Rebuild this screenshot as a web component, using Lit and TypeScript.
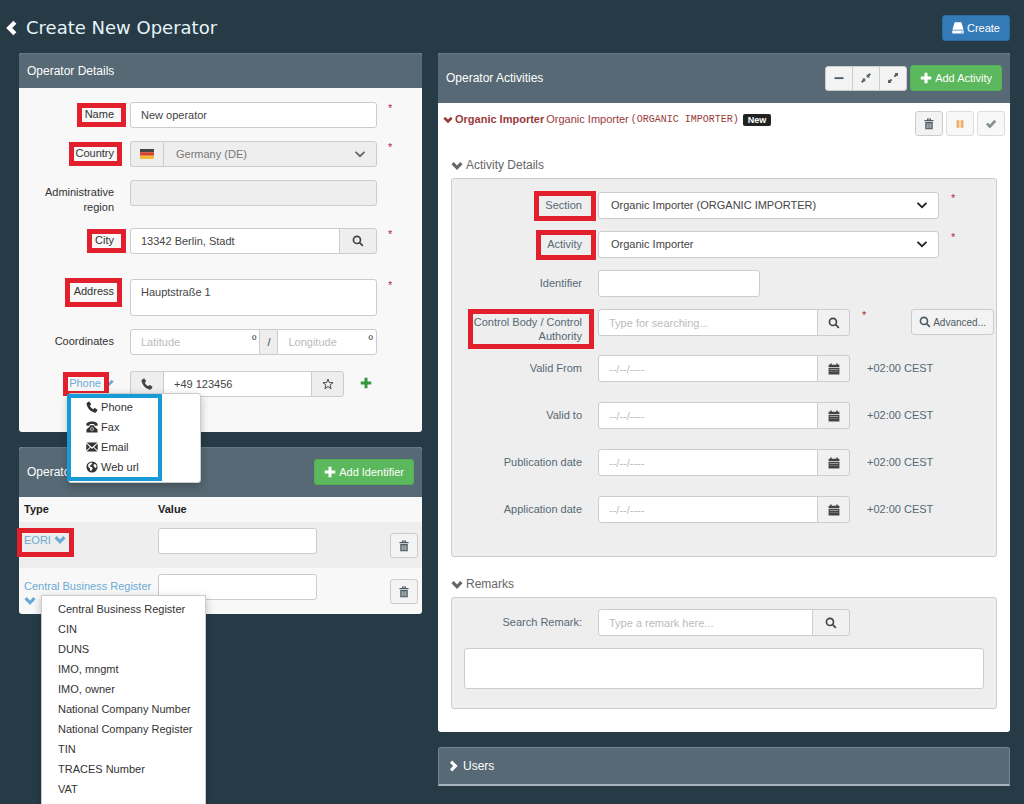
import { LitElement, html, css, svg, nothing } from "lit";
import { customElement, state } from "lit/decorators.js";

const GLYPHS = {
  left: svg`<path d="M10.4.8 13.400 3.800 9.200 8l4.200 4.200-3 3L3.200 8z"/>`,
  right: svg`<path d="M5.6.8 2.600 3.800 6.800 8l-4.200 4.200 3 3L12.800 8z"/>`,
  down: svg`<path d="M.6 5.800 3.600 2.800 8 7.200l4.400-4.400 3 3L8 13.200z"/>`,
  thin: svg`<path d="M2 5.200 8 11l6-5.800" fill="none" stroke="currentColor" stroke-width="2.4"/>`,
  plus: svg`<path d="M6 1h4v5h5v4h-5v5H6v-5H1V6h5z"/>`,
  minus: svg`<path d="M2 7h12v2.4H2z"/>`,
  search: svg`<circle cx="6.6" cy="6.6" r="4.7" fill="none" stroke="currentColor" stroke-width="2.2"/><path d="m9.4 10.9 1.5-1.5 4.4 4.2-1.7 1.7z"/>`,
  drive: svg`<path d="M3.400.4h9.200L15.400 10.400H.6zM.4 11.400h15.200V15.400H.4z"/><path d="M12 12.900h2v1h-2z" fill="#337ab7"/>`,
  shrink: svg`<path d="M9 2.600v4.600h4.400L12 5.800l2.600-2.600-1.800-1.800L10.200 4zM7 13.400V8.800H2.600L4 10.200l-2.600 2.600 1.800 1.800L5.800 12z"/>`,
  grow: svg`<path d="M10 1.400h4.600V6l-1.400-1.400-2.400 2.400L9 5.200l2.400-2.400zM6 14.600H1.400V10l1.400 1.400L5.200 9 7 10.800l-2.400 2.400z"/>`,
  trash: svg`<path d="M5.400 2.600V.8h5.200v1.800H14v1.800H2V2.600zM6.800 2v.6h2.400V2z" fill-rule="evenodd"/><path d="M3 5.400h10V15H3zM5 7v6.600h1V7zm2.500 0v6.600h1V7zM10 7v6.600h1V7z" fill-rule="evenodd"/>`,
  pause: svg`<path d="M3.400 3h3.800v10H3.400zM8.800 3h3.800v10H8.800z"/>`,
  check: svg`<path d="m1.200 8.800 2.600-2.600 2.800 2.600 5.800-6.400 2.600 2.500-8.400 9z"/>`,
  calendar: svg`<path d="M.8 2.400h2.200V.6h2v1.800h6V.6h2v1.800h2.200v3H.8z"/><path d="M.8 6.200h14.400V15.400H.8zm1.400 2.500v.6h11.600v-.6zm0 2.800v.6h11.600v-.6z" fill-rule="evenodd"/>`,
  star: svg`<path d="m8 1.400 1.700 4.700 5 .2-3.900 3.100 1.300 4.800L8 11.500l-4.100 2.700 1.300-4.800-3.900-3.100 5-.2z" fill="none" stroke="currentColor" stroke-width="1.3"/>`,
  handset: svg`<path d="M1 2.600 3.200.9c.5-.4 1-.3 1.400.2l1.900 2.700c.3.5.2 1-.2 1.400L5 6.300c.9 2 2.600 3.700 4.700 4.700l1.200-1.300c.4-.4.9-.4 1.400-.1l2.600 1.800c.5.4.6.9.2 1.400l-1.700 2.300c-.3.4-.8.5-1.300.4C6.400 14.300 1.900 9.700.7 3.900c-.1-.5 0-1 .3-1.300z"/>`,
  fax: svg`<path d="M8 .8c3.900 0 7.600 1.400 7.600 3.800 0 1.200-.4 1.700-1.300 1.700h-2c-.9 0-1.200-.6-1.200-1.400v-.6C9.200 3.800 6.800 3.800 4.900 4.300v.6c0 .8-.3 1.400-1.200 1.400h-2C.8 6.300.4 5.800.4 4.600.4 2.200 4.100.8 8 .8z"/><path d="M5.800 5.600h4.400l.8 1.800 4.400 3.800v4H.6v-4L5 7.400zM8 8.400a2.300 2.300 0 1 0 0 4.600 2.300 2.300 0 0 0 0-4.600z" fill-rule="evenodd"/><circle cx="8" cy="10.700" r="1.400"/>`,
  mail: svg`<path d="M.8 2h14.400L8 8.400zM.4 3.400 5.200 7.900.4 12.600zM15.600 3.400v9.200L10.800 7.900zM6.200 8.800 8 10.500l1.800-1.700 5.400 5.200H.8z"/>`,
  globe: svg`<circle cx="8" cy="8" r="7.400"/><path d="M3 4.400 6.400 2l2.200.6-.8 1.800-2 1-.6 2 2.400.6 1.400 1.800-1.600 2.400-.6 1.800-1.400-2.200-.4-2.600L3 8zM10.600 4l2.600.6 1 2.600-1.400 2.400-1.800-1.800-1-1.600z" fill="#fff"/>`,
};
type Glyph = keyof typeof GLYPHS;

const icon = (name: Glyph, size = "") =>
  html`<svg class="icon ${size}" viewBox="0 0 16 16" fill="currentColor" aria-hidden="true">${GLYPHS[name]}</svg>`;

const CONTACT_TYPES: [Glyph, string][] = [
  ["handset", "Phone"],
  ["fax", "Fax"],
  ["mail", "Email"],
  ["globe", "Web url"],
];

const IDENTIFIER_TYPES = [
  "Central Business Register",
  "CIN",
  "DUNS",
  "IMO, mngmt",
  "IMO, owner",
  "National Company Number",
  "National Company Register",
  "TIN",
  "TRACES Number",
  "VAT",
];

const DATES = ["Valid From", "Valid to", "Publication date", "Application date"];

@customElement("app-root")
export class AppRoot extends LitElement {
  @state() private contactMenu = true;
  @state() private identifierMenu = true;

  static styles = css`
    :host {
      display: block;
      box-sizing: border-box;
      min-height: 100vh;
      overflow: hidden;
      background: #273b47;
      color: #333;
      font: 11px/15px "Liberation Sans", Arial, sans-serif;
    }
    * { box-sizing: border-box; }
    h1, h2, h3 { margin: 0; font-weight: normal; }
    a { color: #6aaad3; text-decoration: none; }
    button, input, select, textarea { font: inherit; color: inherit; margin: 0; }
    .icon { width: 12px; height: 12px; flex: none; vertical-align: -2px; }
    .icon.large { width: 16px; height: 16px; }
    .icon.small { width: 10px; height: 10px; vertical-align: -1px; }

    .top {
      display: flex;
      align-items: center;
      justify-content: space-between;
      padding: 15px 14px 12px 3px;
    }
    .title {
      display: flex;
      align-items: center;
      gap: 7px;
      color: #e6f3f8;
      font: 18px/26px "DejaVu Sans", Verdana, sans-serif;
    }
    .title a { display: flex; color: #fff; }
    .columns {
      display: grid;
      grid-template-columns: minmax(0, 403fr) minmax(0, 572fr);
      align-items: start;
      gap: 16px;
      padding: 0 14px 16px 19px;
    }
    .stack { display: grid; gap: 15px; }

    .panel { background: #f8f8f8; border-radius: 3px; }
    .panel.white { background: #fff; }
    .head {
      display: flex;
      align-items: center;
      gap: 3px;
      min-height: 35px;
      padding: 0 8px 1px;
      background: #566974;
      border-top: 1px solid #647883;
      border-radius: 3px 3px 0 0;
      color: #fff;
    }
    .head.tall { min-height: 50px; }
    .head h2 { flex: 1; font-size: 12px; line-height: 16px; }
    .head.users { min-height: 39px; padding: 0 9px; border: 1px solid #738590; border-bottom: 2px solid #a5b4bd; }

    .btn {
      display: inline-flex;
      align-items: center;
      justify-content: center;
      gap: 3px;
      height: 26px;
      padding: 0 9px;
      border: 1px solid #ccc;
      border-radius: 3px;
      background: #f3f3f3;
      color: #4d5b64;
      white-space: nowrap;
    }
    .btn.blue { background: #337ab7; border-color: #2e6da4; color: #fff; }
    .btn.green { background: #5cb85c; border-color: #55b055; color: #fff; }
    .btn.square { width: 28px; height: 25px; padding: 0; }
    .btn.pale { border-color: #ddd; background: #f8f8f8; color: #849094; }
    .btn.pale.amber { color: #f5ac5c; }
    .btngroup { display: flex; }
    .btngroup .btn { border-radius: 0; margin-left: -1px; }
    .btngroup .btn:first-child { border-radius: 3px 0 0 3px; margin-left: 0; }
    .btngroup .btn:last-child { border-radius: 0 3px 3px 0; }

    .row { display: grid; grid-template-columns: 95px 1fr; column-gap: 16px; }
    .row > .label { text-align: right; padding-top: 5px; }
    .line { display: flex; align-items: flex-start; }
    .req { width: 34px; margin-left: 11px; color: #b3273c; line-height: 13px; }
    .details { display: grid; gap: 13px; padding: 14px 0 35px; }
    .details .line { color: #444; }
    .details .line > .group { flex: 1; }
    .spaced { margin-bottom: 12px; }
    .contact { margin-top: 3px; }

    .group { display: flex; min-width: 0; }
    .field {
      flex: 1;
      width: 100%;
      min-width: 0;
      height: 26px;
      padding: 0 10px;
      border: 1px solid #ccc;
      border-radius: 3px;
      background: #fff;
      color: #444;
      outline: none;
      appearance: none;
      resize: none;
    }
    select.field { padding: 0 12px; }
    .field::placeholder { color: #bbb; opacity: 1; }
    .field:disabled { background: #eee; color: #777; opacity: 1; }
    textarea.field { display: block; height: 37px; padding: 5px 10px; overflow: hidden; }
    .addon {
      display: flex;
      align-items: center;
      justify-content: center;
      width: 33px;
      height: 26px;
      padding: 0;
      flex: none;
      border: 1px solid #ccc;
      background: #eee;
      color: #444;
      border-radius: 0 3px 3px 0;
    }
    .addon.wide { width: 38px; }
    .addon.slim { width: 17px; border-radius: 0; border-left: 0; border-right: 0; }
    .addon:first-child { border-radius: 3px 0 0 3px; }
    .group > * + .addon:not(.slim) { margin-left: -1px; }
    .group > :not(:last-child) .field, .group > .field:not(:last-child) { border-top-right-radius: 0; border-bottom-right-radius: 0; }
    .group > :not(:first-child) .field, .group > .field:not(:first-child) { border-top-left-radius: 0; border-bottom-left-radius: 0; }
    .group > .addon:first-child { border-right: 0; }
    .pick { position: relative; display: flex; flex: 1; }
    .pick .icon { position: absolute; right: 11px; top: 7px; pointer-events: none; color: #222; }
    .pick.off .icon { color: #666; }
    .unit { position: relative; display: flex; }
    .unit.lat { flex: 131 1 0; }
    .unit.lon { flex: 100 1 0; }
    .unit span { position: absolute; right: 4px; top: 4px; font-size: 12px; }
    .flag { width: 14px; height: 10px; }
    .number { width: 214px; }
    .details .line > .number { flex: none; }
    .addline { margin: 6px 0 0 16px; padding: 0; border: 0; background: none; color: #35983a; display: flex; }

    .mark { position: relative; display: inline-block; }
    .mark::after {
      content: "";
      position: absolute;
      inset: -4px -12px -5px -8px;
      border: 5px solid #e2202d;
      pointer-events: none;
    }
    .mark.tight::after { right: -8px; left: -6px; }
    .mark.deep::after { inset: -6px -8px -8px -9px; }
    .mark.large::after { inset: -7px -14px -9px -11px; }
    .mark.block { max-width: 110px; }
    .mark.block::after { inset: -6px -12px -6px -4px; }
    .mark.type::after { inset: -5px -8px -9px -7px; }

    .menuhost { position: relative; }
    .menu {
      position: absolute;
      z-index: 2;
      margin: 0;
      padding: 3px 0 5px;
      list-style: none;
      text-align: left;
      background: #fff;
      border: 1px solid #ccc;
      border-radius: 3px;
      box-shadow: 0 3px 8px rgba(0, 0, 0, 0.25);
    }
    .menu a { display: block; padding: 0 12px 0 16px; color: #333; line-height: 20px; white-space: nowrap; }
    .menu.contacts { left: 49px; top: 22px; width: 133px; }
    .menu.contacts a { padding: 0 17px; }
    .menu.contacts::after {
      content: "";
      position: absolute;
      inset: 0 38px 1px -2px;
      border: 4px solid #169bd7;
      pointer-events: none;
    }
    .menu.types { left: 17px; top: 16px; min-width: 165px; padding-bottom: 12px; border-radius: 0; }

    table { width: 100%; border-collapse: collapse; table-layout: fixed; }
    th { height: 25px; padding: 0 5px; text-align: left; color: #222; }
    td { height: 46px; padding: 6px 0 5px; vertical-align: top; }
    thead td { height: 25px; }
    tbody td:first-child { padding: 11px 0 5px 5px; }
    th:nth-child(2) { padding-left: 0; }
    tbody td:last-child { padding: 11px 4px 5px 0; text-align: right; line-height: 0; }
    .c-type { width: 139px; }
    .c-del { width: 46px; }
    .odd { background: #eee; }
    td .field { display: block; width: 159px; }

    .activities { padding: 8px 13px 23px; }
    .activity { display: flex; justify-content: space-between; margin: 0 -8px; }
    .name { display: flex; align-items: center; gap: 2px; height: 17px; font-size: 11px; color: #9a3b3b; }
    .name code { font: 10px/15px "Liberation Mono", "Courier New", monospace; }
    .badge {
      padding: 0 5px;
      margin-left: 2px;
      border-radius: 2px;
      background: #222;
      color: #fff;
      font-size: 9px;
      line-height: 12px;
      font-weight: bold;
    }
    .tools { display: flex; gap: 3px; }
    .section { padding-top: 2px; margin-top: 20px; color: #566974; }
    .section + .section { padding-top: 0; }
    .section h3 { display: flex; align-items: center; gap: 3px; margin-bottom: 5px; font-size: 12px; line-height: 15px; color: #666; }
    .box { display: grid; gap: 12px; padding: 13px 2px 33px 0; background: #eee; border: 1px solid #ccc; border-radius: 3px; }
    .box .row { grid-template-columns: 130px 1fr; }
    .box .row > .label { padding-top: 6px; line-height: 14px; }
    .box .field, .box .addon { height: 27px; }
    .box .identifier { flex: none; width: 162px; }
    .box .group { width: 252px; }
    .box .req { margin-left: 12px; width: 43px; }
    .box .addon { background: #f1f1f1; }
    .date .line { align-items: center; gap: 17px; }
    .date + .date { margin-top: 8px; }
    .advanced { margin-left: auto; padding: 0 7px; gap: 2px; font-size: 10px; }
    .box.remarks { padding: 11px 12px 19px 0; }
    .box .notes { width: auto; height: 41px; margin-left: 12px; }
  `;

  private marked(text: string, kind = "") {
    return html`<span class="mark ${kind}">${text}</span>`;
  }

  private details() {
    return html`
      <section class="panel">
        <div class="head"><h2>Operator Details</h2></div>
        <form class="details">
          <div class="row">
            <label class="label" for="name">${this.marked("Name")}</label>
            <div class="line"><input class="field" id="name" .value=${"New operator"} /><span class="req">*</span></div>
          </div>
          <div class="row">
            <label class="label" for="country">${this.marked("Country", "tight")}</label>
            <div class="line">
              <div class="group">
                <span class="addon">
                  <svg class="flag" viewBox="0 0 14 10" aria-hidden="true">
                    <path fill="#444" d="M0 0h14v3.300H0z" /><path fill="#d9412c" d="M0 3.300h14v3.400H0z" /><path fill="#f0b93c" d="M0 6.700h14V10H0z" />
                  </svg>
                </span>
                <div class="pick off">
                  <select class="field" id="country" disabled><option>Germany (DE)</option></select>${icon("thin")}
                </div>
              </div>
              <span class="req">*</span>
            </div>
          </div>
          <div class="row">
            <label class="label" for="region">Administrative region</label>
            <div class="line"><input class="field" id="region" disabled /><span class="req"></span></div>
          </div>
          <div class="row spaced">
            <label class="label" for="city">${this.marked("City")}</label>
            <div class="line">
              <div class="group">
                <input class="field" id="city" .value=${"13342 Berlin, Stadt"} />
                <button type="button" class="addon wide" aria-label="Search city">${icon("search")}</button>
              </div>
              <span class="req">*</span>
            </div>
          </div>
          <div class="row">
            <label class="label" for="address">${this.marked("Address", "deep")}</label>
            <div class="line"><textarea class="field" id="address" .value=${"Hauptstraße 1"}></textarea><span class="req">*</span></div>
          </div>
          <div class="row">
            <label class="label" for="latitude">Coordinates</label>
            <div class="line">
              <div class="group">
                <div class="unit lat"><input class="field" id="latitude" placeholder="Latitude" /><span>º</span></div>
                <span class="addon slim">/</span>
                <div class="unit lon"><input class="field" aria-label="Longitude" placeholder="Longitude" /><span>º</span></div>
              </div>
              <span class="req"></span>
            </div>
          </div>
          <div class="row contact menuhost">
            <div class="label">
              <a href="#" @click=${this.toggleContacts}>${this.marked("Phone", "tight")} ${icon("down", "small")}</a>
            </div>
            <div class="line">
              <div class="group number">
                <span class="addon">${icon("handset")}</span>
                <input class="field" aria-label="Phone" .value=${"+49 123456"} />
                <button type="button" class="addon" aria-label="Preferred">${icon("star")}</button>
              </div>
              <button type="button" class="addline" aria-label="Add contact">${icon("plus")}</button>
            </div>
            ${this.contactMenu
              ? html`<ul class="menu contacts">
                  ${CONTACT_TYPES.map(([glyph, text]) => html`<li><a href="#">${icon(glyph)} ${text}</a></li>`)}
                </ul>`
              : nothing}
          </div>
        </form>
      </section>
    `;
  }

  private toggleContacts(e: Event) {
    e.preventDefault();
    this.contactMenu = !this.contactMenu;
  }

  private toggleIdentifiers(e: Event) {
    e.preventDefault();
    this.identifierMenu = !this.identifierMenu;
  }

  private identifiers() {
    const remove = html`<button class="btn square" aria-label="Remove">${icon("trash")}</button>`;
    return html`
      <section class="panel">
        <div class="head tall">
          <h2>Operator Identifiers</h2>
          <button class="btn green">${icon("plus")}Add Identifier</button>
        </div>
        <table>
          <thead>
            <tr><th class="c-type">Type</th><th>Value</th><td class="c-del"></td></tr>
          </thead>
          <tbody>
            <tr class="odd">
              <td><a href="#"><span class="mark type">EORI ${icon("down")}</span></a></td>
              <td><input class="field" aria-label="EORI value" /></td>
              <td>${remove}</td>
            </tr>
            <tr>
              <td>
                <div class="menuhost">
                  <a href="#" @click=${this.toggleIdentifiers}>Central Business Register ${icon("down")}</a>
                  ${this.identifierMenu
                    ? html`<ul class="menu types">${IDENTIFIER_TYPES.map((t) => html`<li><a href="#">${t}</a></li>`)}</ul>`
                    : nothing}
                </div>
              </td>
              <td><input class="field" aria-label="Central Business Register value" /></td>
              <td>${remove}</td>
            </tr>
          </tbody>
        </table>
      </section>
    `;
  }

  private choice(id: string, label: string, value: string) {
    return html`
      <div class="row">
        <label class="label" for=${id}>${this.marked(label, "large")}</label>
        <div class="line">
          <div class="pick"><select class="field" id=${id}><option>${value}</option></select>${icon("thin")}</div>
          <span class="req">*</span>
        </div>
      </div>
    `;
  }

  private activities() {
    return html`
      <section class="panel white">
        <div class="head tall">
          <h2>Operator Activities</h2>
          <div class="btngroup">
            <button class="btn square" aria-label="Hide">${icon("minus")}</button>
            <button class="btn square" aria-label="Collapse">${icon("shrink")}</button>
            <button class="btn square" aria-label="Expand">${icon("grow")}</button>
          </div>
          <button class="btn green">${icon("plus")}Add Activity</button>
        </div>
        <div class="activities">
          <div class="activity">
            <h3 class="name">
              ${icon("down", "small")}<b>Organic Importer</b><span>Organic Importer</span><code>(ORGANIC IMPORTER)</code><span class="badge">New</span>
            </h3>
            <div class="tools">
              <button class="btn square" aria-label="Delete">${icon("trash")}</button>
              <button class="btn square pale amber" aria-label="Suspend">${icon("pause")}</button>
              <button class="btn square pale" aria-label="Validate">${icon("check")}</button>
            </div>
          </div>
          <div class="section">
            <h3>${icon("down")}Activity Details</h3>
            <div class="box">
              ${this.choice("section", "Section", "Organic Importer (ORGANIC IMPORTER)")}
              ${this.choice("activity", "Activity", "Organic Importer")}
              <div class="row">
                <label class="label" for="identifier">Identifier</label>
                <div class="line"><input class="field identifier" id="identifier" /></div>
              </div>
              <div class="row">
                <label class="label" for="body">${this.marked("Control Body / Control Authority", "block")}</label>
                <div class="line">
                  <div class="group">
                    <input class="field" id="body" placeholder="Type for searching..." />
                    <button class="addon" aria-label="Search control body">${icon("search")}</button>
                  </div>
                  <span class="req">*</span>
                  <button class="btn advanced">${icon("search")}Advanced...</button>
                </div>
              </div>
              ${DATES.map(
                (label, i) => html`
                  <div class="row date">
                    <label class="label" for="date${i}">${label}</label>
                    <div class="line">
                      <div class="group">
                        <input class="field" id="date${i}" placeholder="--/--/----" />
                        <button class="addon" aria-label="Open calendar">${icon("calendar")}</button>
                      </div>
                      <span>+02:00 CEST</span>
                    </div>
                  </div>
                `
              )}
            </div>
          </div>
          <div class="section">
            <h3>${icon("down")}Remarks</h3>
            <div class="box remarks">
              <div class="row">
                <label class="label" for="remark">Search Remark:</label>
                <div class="line">
                  <div class="group">
                    <input class="field" id="remark" placeholder="Type a remark here..." />
                    <button class="addon wide" aria-label="Search remark">${icon("search")}</button>
                  </div>
                </div>
              </div>
              <textarea class="field notes" aria-label="Remarks"></textarea>
            </div>
          </div>
        </div>
      </section>
    `;
  }

  render() {
    return html`
      <header class="top">
        <h1 class="title"><a href="#" aria-label="Back">${icon("left", "large")}</a>Create New Operator</h1>
        <button class="btn blue">${icon("drive")}Create</button>
      </header>
      <main class="columns">
        <div class="stack">${this.details()}${this.identifiers()}</div>
        <div class="stack">
          ${this.activities()}
          <section class="head users">${icon("right")}<h2>Users</h2></section>
        </div>
      </main>
    `;
  }
}
